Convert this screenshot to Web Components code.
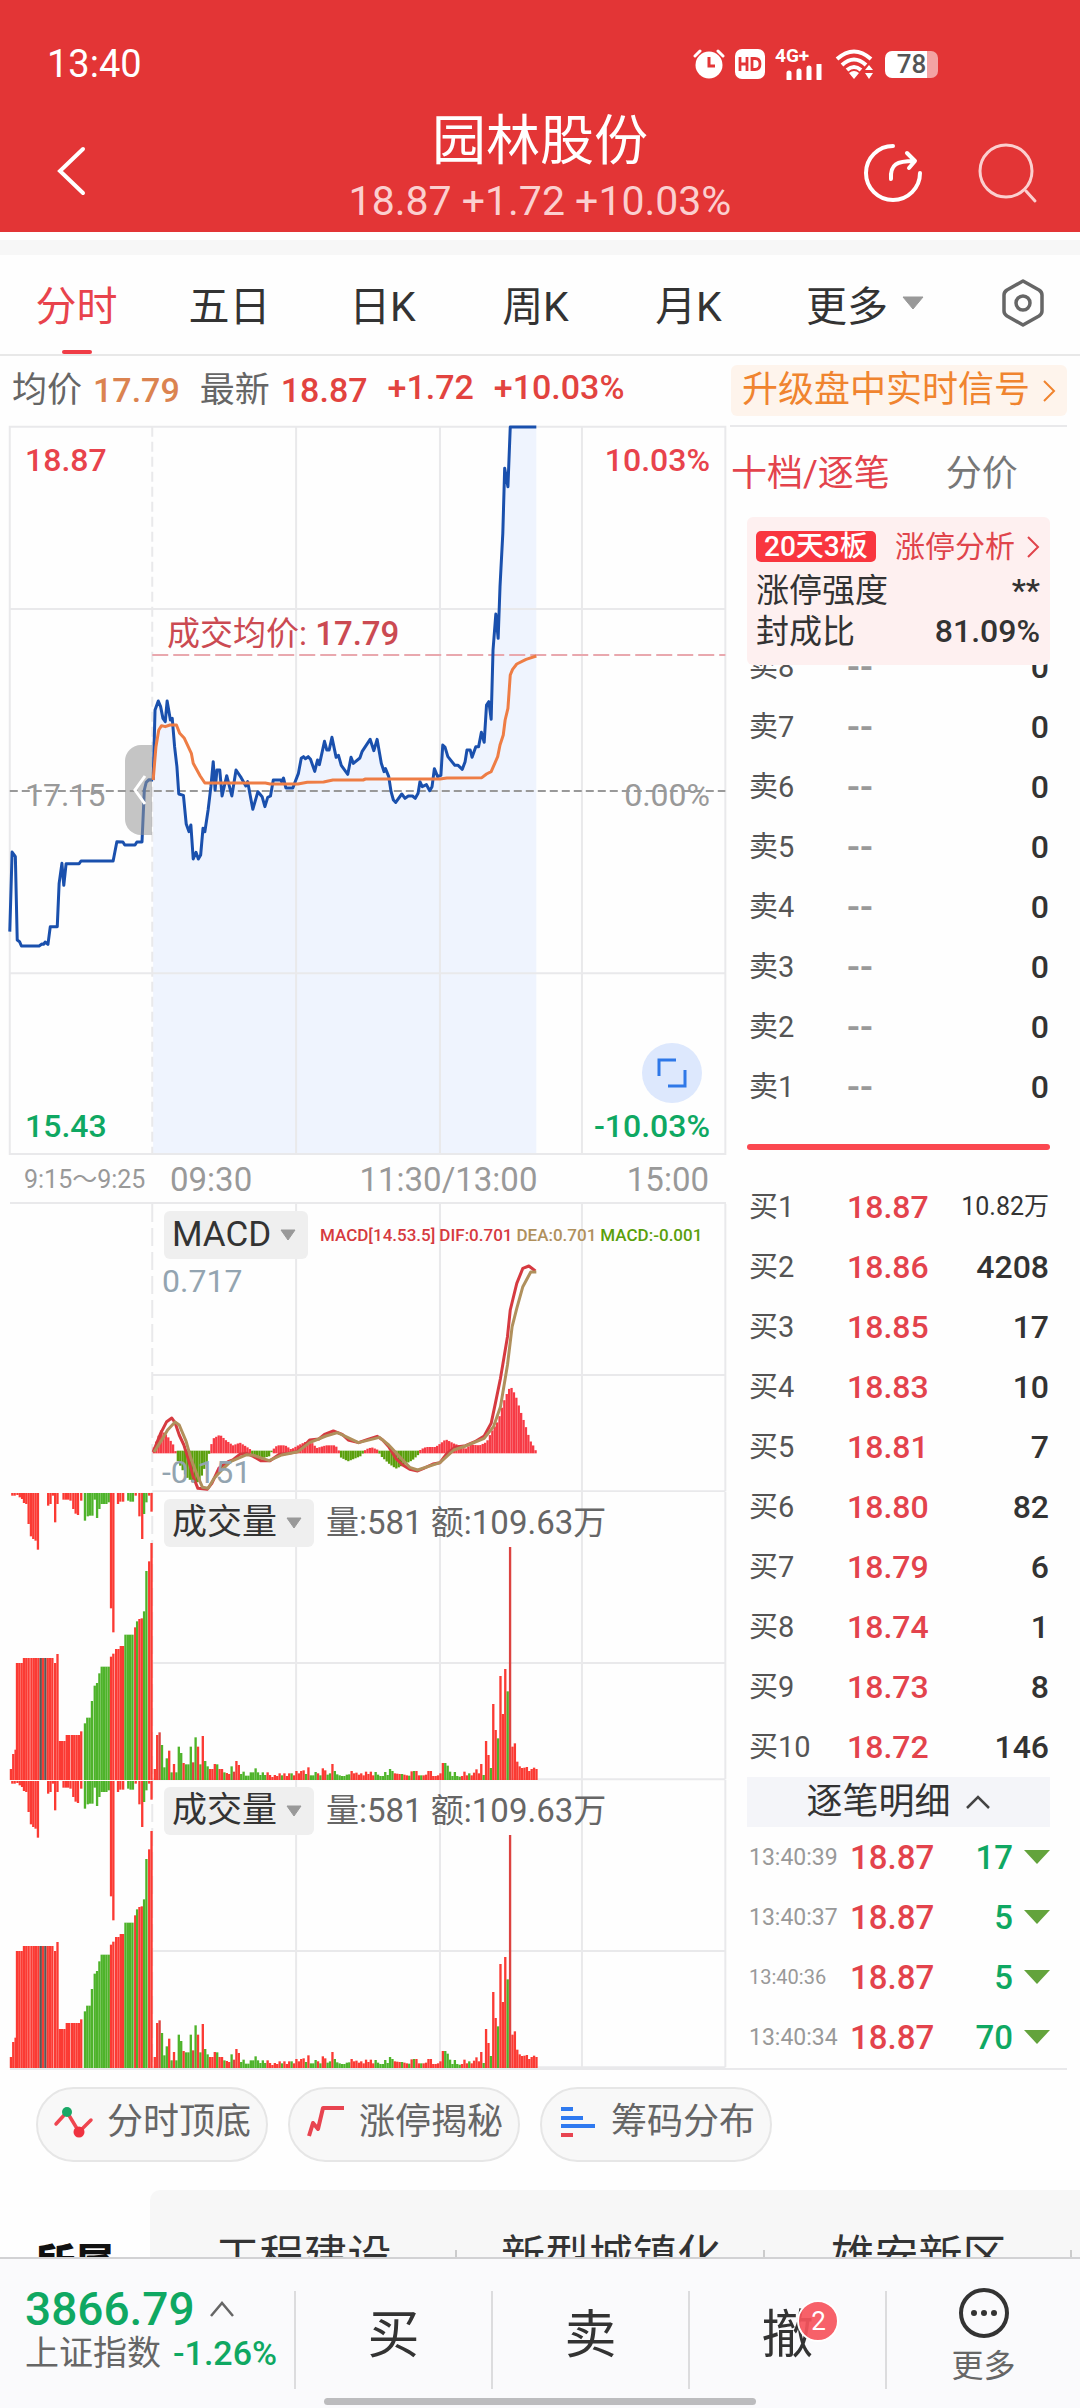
<!DOCTYPE html>
<html lang="zh-CN">
<head>
<meta charset="utf-8">
<meta name="viewport" content="width=device-width, initial-scale=1">
<title>园林股份</title>
<style>
  html, body {
    margin: 0;
    height: 100%;
  }
  body {
    font-family: Roboto, "Noto Sans CJK SC", sans-serif;
    color: #333;
    background: #fefefe;
    --red: #e2433f;
    --green: #0fa862;
    --grid: #e9e9eb;
  }
</style>
</head>
<body>
<stock-page></stock-page>

<script>
const RESET = `
  * { box-sizing: border-box; }
  button, select {
    font: inherit;
    color: inherit;
    background: none;
    border: 0;
    padding: 0;
    margin: 0;
    text-align: inherit;
    appearance: none;
  }
  a { color: inherit; text-decoration: none; }
  svg { display: block; }
  table { border-collapse: collapse; width: 100%; }
  td, th { padding: 0; font-weight: 400; text-align: left; }
`;

class BaseElement extends HTMLElement {
  connectedCallback() {
    this.attachShadow({ mode: 'open' });
    this.shadowRoot.innerHTML = `<style>${RESET}</style>${this.render()}`;
  }
}

class StatusBar extends BaseElement {
  render() {
    return `
      <style>
        :host {
          display: flex;
          align-items: center;
          height: 104px;
          padding: 24px 142px 0 47px;
          color: #fff;
        }
        .clock { font-size: 38px; flex: 1; }
        .icons { display: flex; align-items: center; gap: 10px; }
        .battery {
          display: flex;
          align-items: center;
          justify-content: center;
          width: 53px;
          height: 27px;
          border-radius: 7px;
          background: linear-gradient(to right, #fff 80%, #f3a3a3 80%);
          color: #555;
          font-size: 26px;
          font-weight: 500;
          line-height: 27px;
        }
        .net { font-size: 19px; font-weight: 700; line-height: 16px; }
        .signal { width: 50px; height: 32px; }
      </style>
      <span class="clock">13:40</span>
      <div class="icons">
        <svg width="32" height="32" viewBox="0 0 32 32">
          <circle cx="16" cy="17" r="13.5" fill="#fff"/>
          <path d="M2 8 L7 3 M30 8 L25 3" stroke="#fff" stroke-width="3" stroke-linecap="round"/>
          <path d="M16 9 V18 H22" stroke="#e33536" stroke-width="3" fill="none"/>
        </svg>
        <svg width="30" height="30" viewBox="0 0 30 30">
          <rect width="30" height="30" rx="7" fill="#fff"/>
          <path d="M5 8 V22 M12 8 V22 M5 15 H12 M17 9.500 H20 Q25 9.500 25 15 Q25 20.500 20 20.500 H17 Z" stroke="#e33536" stroke-width="2.800" fill="none"/>
        </svg>
        <div class="signal">
          <div class="net">4G+</div>
          <svg width="50" height="16" viewBox="0 0 50 16">
            <path d="M14 15 V9 M24 15 V7 M34 15 V4 M44 15 V0" stroke="#fff" stroke-width="5" stroke-linecap="round"/>
          </svg>
        </div>
        <svg width="40" height="32" viewBox="0 0 40 32">
          <g fill="none" stroke="#fff" stroke-width="4">
            <path d="M2 11 Q19 -4 36 11"/>
            <path d="M7 17 Q19 6 31 17"/>
            <path d="M12 22 Q19 16 26 22"/>
          </g>
          <path d="M19 31 L14 25 Q19 21 24 25 Z M34 17 L38 22 H30 Z M34 31 L38 25 H30 Z" fill="#fff"/>
        </svg>
        <span class="battery">78</span>
      </div>
    `;
  }
}
customElements.define('status-bar', StatusBar);

class StockHeader extends BaseElement {
  render() {
    return `
      <style>
        :host { display: block; background: #e33536; color: #fff; }
        .row {
          display: grid;
          grid-template-columns: 1fr auto 1fr;
          align-items: center;
          padding: 10px 42px 0;
        }
        .back { padding-left: 13px; }
        .title { text-align: center; }
        h1 { margin: 0; font-size: 54px; font-weight: 400; line-height: 56px; }
        p { margin: 0; font-size: 41px; line-height: 62px; color: #fbcfcf; }
        .actions { display: flex; justify-content: flex-end; gap: 52px; }
      </style>
      <status-bar></status-bar>
      <div class="row">
        <div class="back"><button aria-label="返回">
          <svg width="32" height="52" viewBox="0 0 32 52"><path d="M28 4 L5 26 L28 48" fill="none" stroke="#fff" stroke-width="4" stroke-linecap="round"/></svg>
        </button></div>
        <div class="title">
          <h1>园林股份</h1>
          <p>18.87 +1.72 +10.03%</p>
        </div>
        <div class="actions">
          <button aria-label="分享"><svg width="62" height="62" viewBox="0 0 62 62">
            <g fill="none" stroke="#fff" stroke-width="4" stroke-linecap="round" stroke-linejoin="round">
              <path d="M31 4 A27 27 0 1 0 58 31"/>
              <path d="M29 37 C28 22 35 19 52 19 M45 11 L53 19 L47 26"/>
            </g>
          </svg></button>
          <button aria-label="搜索"><svg width="62" height="62" viewBox="0 0 62 62">
            <g fill="none" stroke="#fbcfcf" stroke-width="3" stroke-linecap="round">
              <circle cx="30" cy="29" r="26"/>
              <path d="M50 49 L59 59"/>
            </g>
          </svg></button>
        </div>
      </div>
    `;
  }
}
customElements.define('stock-header', StockHeader);

class PeriodTabs extends BaseElement {
  render() {
    return `
      <style>
        :host { display: block; border-top: 8px solid #fff; }
        nav {
          display: grid;
          grid-template-columns: repeat(5, 153fr) 200fr 115fr;
          height: 116px;
          border-top: 15px solid #f7f7f7;
          border-bottom: 2px solid #e8e8e8;
          font-size: 41px;
        }
        button {
          display: flex;
          align-items: center;
          justify-content: center;
          gap: 14px;
          position: relative;
          padding-bottom: 4px;
        }
        .active { color: #e8434c; }
        .active::after {
          content: '';
          position: absolute;
          bottom: 0;
          width: 30px;
          height: 4px;
          border-radius: 2px;
          background: #f03c46;
        }
      </style>
      <nav>
        <button class="active">分时</button>
        <button>五日</button>
        <button>日K</button>
        <button>周K</button>
        <button>月K</button>
        <button>更多<svg width="22" height="14" viewBox="0 0 22 14"><path d="M1 1 H21 L11 13 Z" fill="#999" stroke="#999" stroke-linejoin="round"/></svg></button>
        <button aria-label="设置"><svg width="46" height="50" viewBox="0 0 46 50">
          <g fill="none" stroke="#666" stroke-width="3.500" stroke-linejoin="round">
            <path d="M23 3 L39 12 Q42 14 42 17 V33 Q42 36 39 38 L23 47 L7 38 Q4 36 4 33 V17 Q4 14 7 12 Z"/>
            <circle cx="23" cy="25" r="7"/>
          </g>
        </svg></button>
      </nav>
    `;
  }
}
customElements.define('period-tabs', PeriodTabs);

class QuoteLine extends BaseElement {
  render() {
    return `
      <style>
        :host {
          display: flex;
          align-items: center;
          justify-content: space-between;
          height: 69px;
          padding: 0 13px 0 12px;
          font-size: 35px;
          color: #666;
        }
        .values { display: flex; align-items: center; gap: 20px; padding-bottom: 8px; }
        b { font-size: 34px; font-weight: 500; color: var(--red); }
        .avg { color: #db8350; }
        span b { margin-left: 11px; }
        a {
          display: flex;
          align-items: center;
          gap: 12px;
          height: 51px;
          padding: 0 11px;
          border-radius: 6px;
          background: #fef4ec;
          color: #f0842f;
          font-size: 36px;
          line-height: 51px;
        }
      </style>
      <div class="values">
        <span>均价<b class="avg">17.79</b></span>
        <span>最新<b>18.87</b></span>
        <b>+1.72</b>
        <b>+10.03%</b>
      </div>
      <a href="#">升级盘中实时信号<svg width="14" height="26" viewBox="0 0 14 26"><path d="M2 3 L12 13 L2 23" fill="none" stroke="#f0842f" stroke-width="2"/></svg></a>
    `;
  }
}
customElements.define('quote-line', QuoteLine);

// opening auction, 9:15-9:25
const AUCTION = `21,1535 26,1296 33,1310 37,1560 42,1565 46,1578 84,1578 90,1572 94,1573 97,1566 103,1573 108,1520
  123,1520 127,1390 133,1330 137,1396 142,1331 170,1331 174,1323 243,1323 251,1265 264,1266 268,1275 290,1275
  294,1266 305,1266 310,1110 314,1087 320,1079 329,1080`;

const PRICE = `329,1080 333,870 340,843 345,860 350,895 355,905 359,843 366,900 370,895 375,980 380,1040 384,1122
  394,1126 400,1212 406,1235 410,1215 415,1317 421,1297 426,1317 431,1305 436,1225 440,1235 447,1170 453,1100
  458,1025 462,1110 466,1050 472,1050 477,1128 487,1067 498,1128 507,1050 518,1073 528,1098 532,1085 543,1168
  554,1115 563,1130 569,1160 575,1132 581,1128 587,1080 603,1080 605,1085 609,1074 614,1104 629,1104 634,1085
  641,1060 647,1015 652,1010 656,1016 662,1010 667,1018 676,1054 682,1020 686,1034 697,964 702,990 707,990
  713,952 722,1012 727,1006 733,1036 747,1063 754,1012 759,1030 773,1014 778,994 795,958 803,992 810,958
  819,1030 825,1055 828,1046 835,1070 840,1115 845,1140 850,1147 863,1122 870,1135 877,1128 886,1128 892,1135
  898,1120 902,1085 907,1100 916,1094 923,1112 928,1100 933,1046 940,1070 947,1066 951,975 956,982 962,1010
  977,1036 984,1036 993,1048 999,1025 1003,990 1010,990 1014,1012 1022,980 1028,980 1034,937 1040,967 1045,855
  1050,845 1055,898 1059,690 1065,582 1070,655 1074,500 1080,340 1084,145 1091,200 1096,21 1152,21`;

const AVERAGE = `329,1080 335,980 341,930 347,917 355,920 365,915 379,915 386,940 396,955 411,1000 415,1030 430,1068
  440,1089 570,1089 580,1092 640,1092 660,1087 695,1086 715,1080 780,1080 785,1077 945,1077 960,1074 1035,1073
  1045,1062 1055,1055 1069,1010 1074,975 1081,945 1085,900 1091,865 1096,765 1101,748 1110,732 1130,718 1152,708`;

const CHART_STYLE = `
  :host { display: block; position: relative; font-size: 32px; line-height: 40px; }
  .plot { width: 100%; }
  .plot * { vector-effect: non-scaling-stroke; }
  .grid { stroke: var(--grid); stroke-width: 2; fill: none; }
  .line { fill: none; stroke-width: 3; stroke-linejoin: round; }
  .label { position: absolute; }
`;

class PriceChart extends BaseElement {
  render() {
    return `
      <style>
        ${CHART_STYLE}
        .plot { aspect-ratio: 1; }
        .label { font-weight: 500; }
        .left { left: 25px; }
        .right { right: 20px; }
        .top { top: 15px; color: #e8434c; }
        .mid { top: 350px; color: #999; font-weight: 400; }
        .low { bottom: 9px; color: var(--green); }
        .avg { left: 167px; top: 189px; color: #cb4a52; font-weight: 400; font-size: 33px; }
        .avg b { font-weight: 500; }
        .drawer {
          position: absolute;
          left: 125px;
          top: 320px;
          width: 27px;
          height: 90px;
          border-radius: 16px 0 0 16px;
          background: rgba(150, 150, 150, 0.55);
        }
        .drawer svg { margin-left: 8px; }
        .expand {
          position: absolute;
          right: 28px;
          bottom: 52px;
          width: 60px;
          height: 60px;
          border-radius: 50%;
          background: #dde8fd;
        }
        .expand svg { margin: auto; }
      </style>
      <svg class="plot" viewBox="0 15 1568 2190" preserveAspectRatio="none">
        <polygon points="329,2202 ${PRICE} 1152,2202" fill="#eff4fe"/>
        <g class="grid">
          <path d="M21 20 H1558 V2202 H21 Z M21 567 H1558 M21 1660 H1558 M636 20 V2202 M945 20 V2202 M1250 20 V2202"/>
          <path d="M327 20 V2202" stroke-dasharray="10 5"/>
        </g>
        <path d="M327 705 H1558" stroke="#e9a8ae" stroke-width="2" stroke-dasharray="16 5"/>
        <path d="M21 1113 H1558" stroke="#999" stroke-width="2" stroke-dasharray="8 4"/>
        <polyline class="line" points="${AUCTION}" stroke="#1a50ad"/>
        <polyline class="line" points="${PRICE}" stroke="#1a50ad"/>
        <polyline class="line" points="${AVERAGE}" stroke="#ee7d45"/>
      </svg>
      <span class="label left top">18.87</span>
      <span class="label right top">10.03%</span>
      <span class="label left mid">17.15</span>
      <span class="label right mid">0.00%</span>
      <span class="label left low">15.43</span>
      <span class="label right low">-10.03%</span>
      <span class="label avg">成交均价: <b>17.79</b></span>
      <button class="drawer" aria-label="收起">
        <svg width="14" height="32" viewBox="0 0 14 32"><path d="M12 2 L2 16 L12 30" fill="none" stroke="#fff" stroke-width="3"/></svg>
      </button>
      <button class="expand" aria-label="全屏">
        <svg width="30" height="30" viewBox="0 0 30 30"><path d="M2 18 V2 H19 M28 12 V28 H11" fill="none" stroke="#2f78e8" stroke-width="3"/></svg>
      </button>
    `;
  }
}
customElements.define('price-chart', PriceChart);

class TimeAxis extends BaseElement {
  render() {
    return `
      <style>
        :host {
          display: grid;
          grid-template-columns: 142fr 574fr;
          align-items: center;
          height: 49px;
          margin: 0 4px 0 10px;
          border-bottom: 2px solid var(--grid);
          font-size: 33px;
          line-height: 49px;
          color: #999;
        }
        small { font-size: 25px; padding-left: 14px; white-space: nowrap; }
        div { display: grid; grid-template-columns: 190fr auto 172fr; padding: 0 17px 0 18px; }
        span:last-child { text-align: right; }
      </style>
      <small>9:15～9:25</small>
      <div><span>09:30</span><span>11:30/13:00</span><span>15:00</span></div>
    `;
  }
}
customElements.define('time-axis', TimeAxis);

// indicator drop-down, the readings beside it are slotted in
class IndicatorSelect extends BaseElement {
  render() {
    const name = this.getAttribute('name');
    return `
      <style>
        :host {
          position: absolute;
          left: 164px;
          top: 7px;
          display: flex;
          align-items: center;
          gap: 12px;
        }
        label {
          display: flex;
          align-items: center;
          gap: 8px;
          height: 48px;
          padding: 0 12px 0 8px;
          border-radius: 6px;
          background: #efefef;
          font-size: 35px;
          line-height: 48px;
        }
      </style>
      <label>
        <select aria-label="指标"><option>${name}</option></select>
        <svg width="16" height="12" viewBox="0 0 16 12"><path d="M1 1 H15 L8 11 Z" fill="#999" stroke="#999" stroke-linejoin="round"/></svg>
      </label>
      <slot></slot>
    `;
  }
}
customElements.define('indicator-select', IndicatorSelect);

const SUB_GRID = `
  <g class="grid">
    <path d="M327 513 H1558 M327 862 H1558 M636 0 V862 M945 0 V862 M1250 0 V862 M1558 0 V862"/>
    <path d="M327 0 V862" stroke-dasharray="18 6"/>
  </g>
`;

const DIF = `329,936 345,880 358,845 369,834 376,848 385,885 395,915 405,960 415,1010 425,1045 445,1048 455,1030 470,985
  490,965 500,960 515,943 530,940 545,950 560,962 580,962 600,943 620,940 637,935 655,915 665,900 685,897 697,883
  716,873 735,883 748,900 770,908 790,898 810,889 822,900 835,920 850,955 865,975 880,988 897,993 910,985 930,972
  945,968 960,940 977,922 1000,917 1020,905 1040,888 1055,850 1064,790 1075,715 1090,590 1096,510 1110,430
  1123,385 1136,378 1150,393`;

const DEA = `331,936 345,905 360,870 376,846 385,855 400,905 410,955 422,1000 435,1042 447,1045 460,1015 480,985 495,965
  530,944 545,946 578,962 605,945 640,935 665,908 700,888 725,878 770,908 815,892 835,915 855,945 880,982 897,990
  945,968 975,930 1000,918 1040,895 1060,860 1075,800 1090,675 1100,560 1110,505 1123,440 1140,396 1152,396`;

const HISTOGRAM = [
  [329, 10], [345, 65], [358, 50], [375, 15], [379, -20], [390, -50], [400, -75], [415, -92], [428, -90], [436, -60],
  [447, -15], [452, 15], [457, 40], [472, 52], [485, 35], [500, 20], [515, 28], [530, 15], [537, 8], [540, -8],
  [560, -20], [580, -12], [584, 5], [595, 20], [612, 20], [625, 8], [640, 20], [655, 30], [668, 30], [680, 12],
  [700, 20], [720, 20], [727, 5], [730, -15], [747, -28], [775, -12], [785, 8], [798, 14], [812, 6], [816, -10],
  [835, -35], [850, -50], [865, -40], [885, -25], [897, -10], [903, 8], [915, 15], [935, 15], [945, 25], [957, 38],
  [975, 25], [990, 18], [998, 8], [1010, 22], [1030, 20], [1045, 30], [1055, 60], [1070, 95], [1077, 130],
  [1085, 165], [1096, 198], [1107, 170], [1117, 125], [1128, 80], [1138, 35], [1148, 12], [1153, -6]
];

const STEP = 825 / 160;

class MacdChart extends BaseElement {
  bars() {
    let out = '';
    for (let i = 0; i < 160; i++) {
      const x = 330 + i * STEP;
      const n = HISTOGRAM.findIndex(p => p[0] >= x);
      if (n < 1) continue;
      const [x0, h0] = HISTOGRAM[n - 1];
      const [x1, h1] = HISTOGRAM[n];
      const h = h0 + (h1 - h0) * (x - x0) / (x1 - x0);
      out += h > 0
        ? `<rect x="${x - 2}" y="${936 - h}" width="5" height="${h + 4}" fill="#f73a45"/>`
        : `<rect x="${x - 2}" y="932" width="5" height="${4 - h}" fill="#5a9f0c"/>`;
    }
    return out;
  }
  render() {
    return `
      <style>
        ${CHART_STYLE}
        .plot { aspect-ratio: 730 / 288; }
        .label { left: 162px; color: #93a4b0; }
        .max { top: 57px; }
        .min { bottom: 0; }
        .values { display: flex; gap: 4px; font-size: 17px; font-weight: 500; white-space: nowrap; color: #d63a40; }
        .dea { color: #b0905c; }
        .macd { color: #5a9f0c; }
      </style>
      <svg class="plot" viewBox="0 192 1568 864" preserveAspectRatio="none">
        <g transform="translate(0 192)">${SUB_GRID}</g>
        ${this.bars()}
        <polyline class="line" points="${DIF}" stroke="#d63a40"/>
        <polyline class="line" points="${DEA}" stroke="#b0905c"/>
      </svg>
      <indicator-select name="MACD">
        <div class="values">
          <span>MACD[14.53.5]</span><span>DIF:0.701</span><span class="dea">DEA:0.701</span><span class="macd">MACD:-0.001</span>
        </div>
      </indicator-select>
      <span class="label max">0.717</span>
      <span class="label min">-0.151</span>
    `;
  }
}
customElements.define('macd-chart', MacdChart);

const BAR_COLORS = { r: '#fb3a33', g: '#4eb32a', d: '#5c5754', m: '#dc4340' };

// auction bars as "x:height+colour", matched volume grows up and the rest hangs down
const MATCHED = `23:33r 28:78r 33:91r 36:351r 41:351r 46:351r 51:366r 56:366r 61:366r 67:366r 72:366r 77:366r 82:366r
  87:366d 92:366r 97:366d 102:366r 107:366r 112:366r 118:351r 123:378r 128:117r 133:117r 138:117r 143:135r 148:135r
  154:135r 159:135r 164:135r 169:135r 174:146r 182:170g 187:187g 192:187g 197:237g 203:283g 208:291g 213:320g
  218:340g 223:340g 228:340g 233:340g 238:370r 243:379r 249:393r 254:393r 259:402r 264:402r 269:436g 274:436g
  279:436g 284:436g 290:458r 294:476g 299:483r 304:485r 309:506g 314:627g 320:656r 325:711r`;

const UNMATCHED = `26:8r 31:8r 37:6r 42:13r 47:18r 51:30r 56:33r 61:93r 66:130r 71:138r 76:143r 81:170r 103:38r 108:33r
  113:8r 118:88r 123:33r 136:20r 141:20r 146:20r 151:23r 157:48r 162:62r 167:66r 174:23r 182:83g 188:70g 193:68g
  198:68g 203:20g 208:75g 213:48g 218:33g 223:33g 228:33g 233:28g 238:346r 243:418r 253:33r 258:26r 264:26r
  275:23g 280:26g 285:26g 291:8r 299:70r 305:138r 309:63g 314:28g 320:8r 325:56r`;

// one-minute volumes from 09:30
const MINUTES = `33r 135r 143m 105g 38g 65g 88r 23g 48r 23g 100g 81g 51r 47g 47g 100g 53m 128g 100r 47g 132r 57g 41g 33r
  33r 48r 47g 33r 33r 23g 21r 18r 41g 25m 57r 45r 18g 25g 13g 13g 23g 23g 35g 23g 15g 23g 15g 23r 15r 9r 15r 12r
  20r 14g 20r 12r 20r 20g 14r 27r 20r 27r 29r 18g 38r 14g 14g 24g 20r 14g 35r 29r 16g 20g 48r 27g 17g 14g 12g 12g
  16g 17g 27r 20r 22r 16r 20r 14r 25r 18r 25r 14r 24g 16g 12g 12g 24g 15g 33g 27g 20r 19r 18r 18g 16r 14r 13g
  26r 27g 27r 14r 14g 14r 16r 27r 27r 12r 12r 14r 20r 51r 51g 43g 25g 12g 24g 12g 10g 12r 25r 14r 20g 14r 22r 32r
  20r 48r 15g 117r 75r 36g 228r 150r 125g 312r 198r 333r 266g 699m 100r 110r 55r 41r 36r 37r 39r 27r 33r 37r 33r`;

class VolumeChart extends BaseElement {
  bar(x, h, color, top) {
    return `<rect x="${x - 2}" y="${top ? 42 : 903 - h}" width="5" height="${h}" fill="${BAR_COLORS[color]}"/>`;
  }
  auction(list, top) {
    return list.trim().split(/\s+/).map(item => {
      const [x, value] = item.split(':');
      return this.bar(+x, parseInt(value), value.slice(-1), top);
    }).join('');
  }
  minutes() {
    return MINUTES.split(/\s+/).map((v, i) => this.bar(332 + i * STEP, parseInt(v), v.slice(-1))).join('');
  }
  render() {
    return `
      <style>
        ${CHART_STYLE}
        .plot { aspect-ratio: 730 / 288; overflow: visible; }
        .values { color: #666; font-size: 33px; white-space: pre; }
      </style>
      <svg class="plot" viewBox="0 39 1568 864" preserveAspectRatio="none">
        <g transform="translate(0 39)">${SUB_GRID}</g>
        ${this.auction(UNMATCHED, true)}
        ${this.auction(MATCHED)}
        ${this.minutes()}
      </svg>
      <indicator-select name="成交量"><span class="values">量:581 额:109.63万</span></indicator-select>
    `;
  }
}
customElements.define('volume-chart', VolumeChart);

class LimitCard extends BaseElement {
  render() {
    return `
      <style>
        :host {
          display: block;
          position: relative;
          height: 148px;
          margin-bottom: -28px;
          padding: 9px 10px 0 9px;
          border-radius: 6px;
          background: #fef0f0;
          font-size: 33px;
          line-height: 41px;
        }
        .row { display: flex; align-items: center; justify-content: space-between; height: 41px; }
        .head { margin-bottom: 3px; }
        .badge {
          padding: 0 8px;
          border-radius: 5px;
          background: #f9363f;
          color: #fff;
          font-size: 28px;
          font-weight: 500;
          line-height: 31px;
        }
        a { display: flex; align-items: center; gap: 11px; font-size: 30px; color: #e0444b; }
        b { font-size: 32px; font-weight: 500; }
      </style>
      <div class="row head">
        <span class="badge">20天3板</span>
        <a href="#">涨停分析<svg width="14" height="24" viewBox="0 0 14 24"><path d="M2 2 L12 12 L2 22" fill="none" stroke="#e0444b" stroke-width="2"/></svg></a>
      </div>
      <div class="row"><span>涨停强度</span><b>**</b></div>
      <div class="row"><span>封成比</span><b>81.09%</b></div>
    `;
  }
}
customElements.define('limit-card', LimitCard);

class OrderTable extends BaseElement {
  render() {
    const rows = this.getAttribute('rows').split(';').map(r => r.split(','));
    return `
      <style>
        :host { display: block; }
        table { table-layout: fixed; }
        tr { height: 60px; line-height: 44px; }
        th { width: 100px; padding-left: 2px; font-size: 29px; color: #555; }
        td { font-size: 32px; font-weight: 500; text-align: right; padding-right: 1px; }
        td.price { text-align: left; width: 90px; color: #e3434c; padding: 0; }
        td.none { color: #999; font-size: 38px; }
        td.small { font-size: 25px; font-weight: 400; }
      </style>
      <table>
        ${rows.map(([name, price, count]) => `
          <tr>
            <th scope="row">${name}</th>
            <td class="price ${price === '--' ? 'none' : ''}">${price}</td>
            <td class="${count.endsWith('万') ? 'small' : ''}">${count}</td>
          </tr>`).join('')}
      </table>
    `;
  }
}
customElements.define('order-table', OrderTable);

class TickList extends BaseElement {
  render() {
    const ticks = [['13:40:39', 17], ['13:40:37', 5], ['13:40:36', 5, 'small'], ['13:40:34', 70]];
    return `
      <style>
        :host { display: block; }
        button {
          display: flex;
          align-items: center;
          justify-content: center;
          gap: 14px;
          width: 100%;
          height: 50px;
          background: #f4f5f9;
          font-size: 36px;
          line-height: 50px;
        }
        table { table-layout: fixed; }
        tr { height: 60px; }
        td { font-size: 33px; font-weight: 500; color: #e3434c; }
        .time { width: 103px; padding-left: 2px; font-size: 23px; font-weight: 400; color: #999; }
        .small { font-size: 20px; }
        .count { text-align: right; color: var(--green); }
        .mark { width: 37px; }
        .mark svg { margin-left: auto; }
      </style>
      <button>逐笔明细<svg width="26" height="16" viewBox="0 0 26 16"><path d="M2 14 L13 3 L24 14" fill="none" stroke="#444" stroke-width="2.500"/></svg></button>
      <table>
        ${ticks.map(([time, count, size = '']) => `
          <tr>
            <td class="time ${size}">${time}</td>
            <td>18.87</td>
            <td class="count">${count}</td>
            <td class="mark"><svg width="26" height="14" viewBox="0 0 26 14"><path d="M0 0 H26 L13 14 Z" fill="#63a33c"/></svg></td>
          </tr>`).join('')}
      </table>
    `;
  }
}
customElements.define('tick-list', TickList);

class OrderBook extends BaseElement {
  render() {
    return `
      <style>
        :host { display: block; margin-right: 13px; border-top: 2px solid var(--grid); }
        nav { display: flex; align-items: center; gap: 56px; height: 90px; padding: 0 0 4px 1px; font-size: 36px; }
        button { color: #777; }
        button.active { color: #e3434c; }
        .body { padding: 0 17px; }
        hr { height: 6px; margin: 27px 0; border: 0; border-radius: 3px; background: #fb4850; }
      </style>
      <nav><button class="active">十档/逐笔</button><button>分价</button></nav>
      <div class="body">
        <limit-card></limit-card>
        <order-table rows="卖8,--,0;卖7,--,0;卖6,--,0;卖5,--,0;卖4,--,0;卖3,--,0;卖2,--,0;卖1,--,0"></order-table>
        <hr>
        <order-table rows="买1,18.87,10.82万;买2,18.86,4208;买3,18.85,17;买4,18.83,10;买5,18.81,7;买6,18.80,82;买7,18.79,6;买8,18.74,1;买9,18.73,8;买10,18.72,146"></order-table>
        <tick-list></tick-list>
      </div>
    `;
  }
}
customElements.define('order-book', OrderBook);

class ToolChip extends BaseElement {
  render() {
    return `
      <style>
        :host { display: block; }
        button {
          display: flex;
          align-items: center;
          gap: 12px;
          height: 75px;
          padding: 0 15px 5px;
          border: 2px solid #e6e6e6;
          border-radius: 38px;
          background: #f8f8f8;
          font-size: 36px;
          line-height: 64px;
          color: #666;
        }
      </style>
      <button><slot name="icon"></slot><slot></slot></button>
    `;
  }
}
customElements.define('tool-chip', ToolChip);

class SectorStrip extends BaseElement {
  render() {
    return `
      <style>
        :host { display: grid; grid-template-columns: 150fr 930fr; }
        h2 { margin: 0; padding: 52px 0 0 36px; font-size: 39px; line-height: 42px; color: #111; font-weight: 900; }
        .list {
          display: grid;
          grid-template-columns: 307fr 308fr 307fr 8fr;
          padding-top: 40px;
          border-radius: 10px 0 0 0;
          background: #f7f7f7;
          font-size: 44px;
          line-height: 54px;
          text-align: center;
        }
        .list a { background: linear-gradient(#ccc, #ccc) right 20px / 2px 30px no-repeat; }
      </style>
      <h2>所属</h2>
      <div class="list"><a href="#">工程建设</a><a href="#">新型城镇化</a><a href="#">雄安新区</a></div>
    `;
  }
}
customElements.define('sector-strip', SectorStrip);

class TradeBar extends BaseElement {
  render() {
    return `
      <style>
        :host {
          display: block;
          background: #fafafc;
          border-top: 2px solid #d2d2d4;
          padding: 32px 0 3px;
        }
        .cells { display: grid; grid-template-columns: 294fr 197fr 197fr 197fr 195fr; height: 84px; }
        .cells > * + * { border-left: 2px solid #dcdcde; }
        .index { padding-left: 25px; white-space: nowrap; }
        .index div { display: flex; align-items: center; }
        .index .point { gap: 14px; height: 36px; font-size: 46px; font-weight: 500; color: var(--green); }
        .index .name { gap: 12px; height: 52px; font-size: 34px; line-height: 52px; color: #666; }
        .index b { color: var(--green); font-weight: 500; }
        button { text-align: center; font-size: 52px; line-height: 60px; padding-bottom: 8px; }
        .cancel { position: relative; display: inline-block; }
        .badge {
          position: absolute;
          left: 36px;
          top: -6px;
          width: 42px;
          height: 42px;
          border: 2px solid #fff;
          border-radius: 50%;
          background: rgba(246, 84, 92, 0.92);
          color: #fff;
          font-size: 26px;
          line-height: 38px;
        }
        .more {
          display: flex;
          flex-direction: column;
          align-items: center;
          gap: 4px;
          padding: 0;
          font-size: 32px;
          line-height: 46px;
          color: #666;
        }
        .more svg { flex: none; margin-top: -4px; }
        .home { width: 40%; height: 7px; margin: 23px auto 0; border-radius: 4px; background: #bcbcbe; }
      </style>
      <div class="cells">
        <a class="index" href="#">
          <div class="point">3866.79<svg width="26" height="18" viewBox="0 0 26 18"><path d="M2 16 L13 3 L24 16" fill="none" stroke="#666" stroke-width="2.500"/></svg></div>
          <div class="name">上证指数<b>-1.26%</b></div>
        </a>
        <button>买</button>
        <button>卖</button>
        <button><span class="cancel">撤<span class="badge">2</span></span></button>
        <button class="more">
          <svg width="52" height="52" viewBox="0 0 52 52">
            <circle cx="26" cy="26" r="23" fill="none" stroke="#333" stroke-width="4"/>
            <circle cx="16" cy="26" r="3" fill="#333"/><circle cx="26" cy="26" r="3" fill="#333"/><circle cx="36" cy="26" r="3" fill="#333"/>
          </svg>
          更多
        </button>
      </div>
      <div class="home"></div>
    `;
  }
}
customElements.define('trade-bar', TradeBar);

class StockPage extends BaseElement {
  render() {
    return `
      <style>
        :host { display: flex; flex-direction: column; height: 100vh; }
        main { flex: 1; min-height: 0; overflow: hidden; }
        .board { display: grid; grid-template-columns: 730fr 350fr; align-items: start; }
        .board > * { min-width: 0; }
        .tools {
          display: flex;
          gap: 20px;
          margin: 0 13px 28px 10px;
          padding: 17px 26px 0;
          border-top: 2px solid var(--grid);
        }
      </style>
      <stock-header></stock-header>
      <main>
        <period-tabs></period-tabs>
        <quote-line></quote-line>
        <div class="board">
          <div>
            <price-chart></price-chart>
            <time-axis></time-axis>
            <macd-chart></macd-chart>
            <volume-chart></volume-chart>
            <volume-chart></volume-chart>
          </div>
          <order-book></order-book>
        </div>
        <div class="tools">
          <tool-chip>
            <svg slot="icon" width="42" height="36" viewBox="0 0 42 36">
              <path d="M3 20 L14 8 L26 28 L38 16" fill="none" stroke="#ef4650" stroke-width="3.500" stroke-linecap="round"/>
              <circle cx="14" cy="8" r="5" fill="#19a866"/><circle cx="26" cy="28" r="5.500" fill="#ef3340"/>
            </svg>分时顶底</tool-chip>
          <tool-chip>
            <svg slot="icon" width="42" height="36" viewBox="0 0 42 36">
              <path d="M4 32 L8 19 L13 25 L18 4 H39" fill="none" stroke="#e84450" stroke-width="4" stroke-linejoin="round"/>
            </svg>涨停揭秘</tool-chip>
          <tool-chip>
            <svg slot="icon" width="42" height="36" viewBox="0 0 42 36">
              <path d="M4 5 H16 M4 14 H26 M4 22 H38" stroke="#2f7af0" stroke-width="4"/>
              <path d="M4 31 H16" stroke="#e84450" stroke-width="4"/>
            </svg>筹码分布</tool-chip>
        </div>
        <sector-strip></sector-strip>
      </main>
      <trade-bar></trade-bar>
    `;
  }
}
customElements.define('stock-page', StockPage);
</script>
</body>
</html>
